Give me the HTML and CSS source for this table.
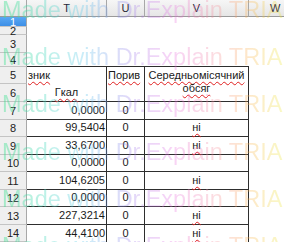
FILE: index.html
```html
<!DOCTYPE html>
<html>
<head>
<meta charset="utf-8">
<link rel="stylesheet" href="styles.css">
</head>
<body>
<div class="sheet">
  <div class="corner"></div>
  <div class="colhead">T</div>
  <div class="colhead">U</div>
  <div class="colhead">V</div>
  <div class="colhead last">W</div>

  <div class="rowhead sel">1</div><div class="cell"></div><div class="cell"></div><div class="cell"></div><div class="cell"></div>
  <div class="rowhead">2</div><div class="cell"></div><div class="cell"></div><div class="cell"></div><div class="cell"></div>
  <div class="rowhead">3</div><div class="cell"></div><div class="cell"></div><div class="cell"></div><div class="cell"></div>
  <div class="rowhead">4</div><div class="cell bb"></div><div class="cell bb"></div><div class="cell bb"></div><div class="cell"></div>

  <div class="rowhead">5</div>
  <div class="cell br left"><span class="sp">зник</span></div>
  <div class="cell br left top"><span class="sp">Порив</span></div>
  <div class="cell br bb merged"><span class="sp">Середньомісячний</span><br><span class="sp">обсяг</span></div>
  <div class="cell"></div>

  <div class="rowhead">6</div>
  <div class="cell br bb center"><span class="sp">Гкал</span></div>
  <div class="cell br bb"></div>
  <div class="cell"></div>

  <div class="rowhead">7</div><div class="cell br bb num">0,0000</div><div class="cell br bb center">0</div><div class="cell br bb center"></div><div class="cell"></div>
  <div class="rowhead">8</div><div class="cell br bb num">99,5404</div><div class="cell br bb center">0</div><div class="cell br bb center"><span class="sp">ні</span></div><div class="cell"></div>
  <div class="rowhead">9</div><div class="cell br bb num">33,6700</div><div class="cell br bb center">0</div><div class="cell br bb center"><span class="sp">ні</span></div><div class="cell"></div>
  <div class="rowhead">10</div><div class="cell br bb num">0,0000</div><div class="cell br bb center">0</div><div class="cell br bb center"></div><div class="cell"></div>
  <div class="rowhead">11</div><div class="cell br bb num">104,6205</div><div class="cell br bb center">0</div><div class="cell br bb center"><span class="sp">ні</span></div><div class="cell"></div>
  <div class="rowhead">12</div><div class="cell br bb num">0,0000</div><div class="cell br bb center">0</div><div class="cell br bb center"></div><div class="cell"></div>
  <div class="rowhead">13</div><div class="cell br bb num">227,3214</div><div class="cell br bb center">0</div><div class="cell br bb center"><span class="sp">ні</span></div><div class="cell"></div>
  <div class="rowhead">14</div><div class="cell br num">44,4100</div><div class="cell br center">0</div><div class="cell br center"><span class="sp">ні</span></div><div class="cell"></div>
</div>
<div class="watermark">
  <div class="wm">Made with Dr.Explain TRIAL</div>
  <div class="wm">Made with Dr.Explain TRIAL</div>
  <div class="wm">Made with Dr.Explain TRIAL</div>
  <div class="wm">Made with Dr.Explain TRIAL</div>
  <div class="wm">Made with Dr.Explain TRIAL</div>
  <div class="wm">Made with Dr.Explain TRIAL</div>
</div>
</body>
</html>
```
FILE: styles.css
```css
html, body {
  margin: 0;
  padding: 0;
  background: #ffffff;
  overflow: hidden;
  width: 284px;
  height: 242px;
  position: relative;
}

.sheet {
  display: grid;
  grid-template-columns: 27px 80px 38px 104px 35px;
  grid-template-rows: 17px 10px 8px 18px 14px 17px 18px 18px 17px 18px 17px 18px 17px 18px 17px;
  width: 284px;
  height: 242px;
  font-family: "Liberation Sans", Arial, sans-serif;
  font-size: 11px;
  color: #1a1a1a;
}

.corner {
  background: linear-gradient(#f6f6f6, #e6e6e6);
  border-right: 1px solid #a8a8a8;
  border-bottom: 1px solid #9a9a9a;
}

.colhead {
  background: linear-gradient(#f6f6f6, #e6e6e6);
  border-right: 1px solid #a8a8a8;
  border-bottom: 1px solid #9a9a9a;
  display: flex;
  align-items: center;
  justify-content: center;
  color: #2a2a3a;
  font-size: 11px;
  line-height: 16px;
}

.colhead.last {
  border-right: none;
  justify-content: flex-start;
  padding-left: 21px;
}

.rowhead {
  background: #efefef;
  border-right: 1px solid #a8a8a8;
  border-bottom: 1px solid #c4c4c4;
  display: flex;
  align-items: center;
  justify-content: center;
  color: #222;
  font-size: 11px;
  line-height: 12px;
  overflow: visible;
  box-sizing: border-box;
}

.rowhead.sel {
  background: linear-gradient(#5aa8f4, #3d8fe6);
  color: #ffffff;
}

.cell {
  box-sizing: border-box;
  display: flex;
  align-items: flex-end;
  padding: 0 2px 2px 2px;
  line-height: 13px;
  white-space: nowrap;
  overflow: visible;
  min-width: 0;
}

.br { border-right: 1px solid #2e2e2e; }
.bb { border-bottom: 1px solid #2e2e2e; }

.left { justify-content: flex-start; padding-left: 1px; }
.top { align-items: flex-start; padding-top: 2px; }
.center { justify-content: center; }
.num { justify-content: flex-end; padding-right: 1px; }

.merged {
  grid-row: span 2;
  display: block;
  text-align: center;
  padding: 2px 0 0 0;
  line-height: 13px;
}

.sp {
  text-decoration: underline wavy #e02020;
  text-decoration-thickness: 1px;
  text-underline-offset: 2px;
  text-decoration-skip-ink: none;
}

.watermark {
  position: absolute;
  left: 0;
  top: 0;
  width: 284px;
  height: 242px;
  overflow: hidden;
  pointer-events: none;
}

.wm {
  font-family: "Liberation Sans", Arial, sans-serif;
  font-size: 23.5px;
  line-height: 47.2px;
  white-space: nowrap;
  width: 282px;
  margin-left: 2px;
  overflow: hidden;
  color: transparent;
  background: linear-gradient(90deg,
    rgba(60, 225, 140, 0.42) 0px,
    rgba(80, 215, 200, 0.36) 50px,
    rgba(90, 200, 235, 0.32) 80px,
    rgba(150, 130, 235, 0.30) 125px,
    rgba(230, 110, 225, 0.30) 170px,
    rgba(245, 140, 150, 0.30) 215px,
    rgba(250, 175, 80, 0.30) 245px,
    rgba(235, 235, 60, 0.30) 282px);
  -webkit-background-clip: text;
  background-clip: text;
}

.wm:first-child {
  margin-top: -13px;
}
```
